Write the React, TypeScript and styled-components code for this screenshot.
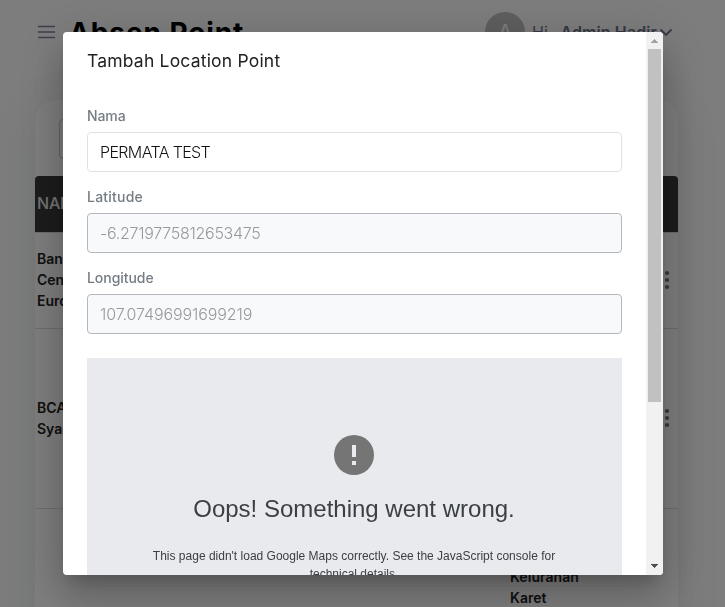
import React from "react";
import styled, { createGlobalStyle } from "styled-components";

const Global = createGlobalStyle`
  * { box-sizing: border-box; }
  html, body { margin: 0; height: 100%; overflow: hidden; }
  body { background: #fafafa; font-family: Inter, "Open Sans", sans-serif; }
`;

const Page = styled.div`
  height: 607px;
  overflow: hidden;
  padding: 0 47px 0 35px;
`;

const Header = styled.header`
  height: 64px;
  display: flex;
  align-items: center;
  padding-left: 3px;
`;

const Burger = styled.svg`
  display: block;
  width: 17px;
  height: 16px;
  margin-right: 14px;
  flex: none;
`;

const Title = styled.h1`
  margin: 0;
  padding-top: 2px;
  font-size: 28px;
  line-height: 40px;
  font-weight: 700;
  letter-spacing: 0.9px;
  color: #000;
  white-space: nowrap;
`;

const User = styled.div`
  margin-left: auto;
  display: flex;
  align-items: center;
  color: #6c7386;
  font-size: 16px;
  white-space: nowrap;
  margin-right: 5px;
`;

const Avatar = styled.div`
  width: 40px;
  height: 40px;
  border-radius: 50%;
  background: #bdbdbd;
  color: #fafafa;
  display: grid;
  place-items: center;
  font-size: 20px;
  margin-right: 7px;
`;

const UserName = styled.b`
  margin-left: 8px;
  font-weight: 600;
  letter-spacing: 0.1px;
`;

const Chevron = styled.svg`
  display: block;
  width: 14px;
  height: 9px;
  margin-left: 2px;
`;

const Card = styled.main`
  width: 643px;
  height: 620px;
  margin-top: 36px;
  border-radius: 20px;
  background: #fcfcfc;
  box-shadow: 0 8px 45px rgba(3, 65, 45, 0.1);
`;

const Filters = styled.div`
  height: 76px;
  padding: 19px 24px;
`;

const Search = styled.div`
  width: 240px;
  height: 40px;
  border: 1px solid #c4c4c4;
  border-radius: 4px;
`;

const TableHead = styled.div`
  height: 56px;
  padding: 0 2px 2px;
  display: flex;
  align-items: center;
  background: #383838;
  border-radius: 4px 4px 0 0;
  color: #e8e8e8;
  font-size: 16px;
  font-weight: 500;
  letter-spacing: -0.2px;
`;

const Row = styled.div<{ $height: number }>`
  height: ${(p) => p.$height}px;
  display: grid;
  grid-template-columns: 66px 1fr 176px 22px;
  align-items: center;
  padding: 0 0 2px 2px;
  border-top: 1px solid #dadada;
  color: #212121;
  font-size: 14px;
  line-height: 21px;
  font-weight: 600;
`;

const Address = styled.div`
  grid-column: 3;
  align-self: start;
  padding: 57px 0 0 30px;
  letter-spacing: 0.05px;
`;

const Dots = styled.svg`
  grid-column: 4;
  display: block;
  width: 22px;
  height: 20px;
`;

const Backdrop = styled.div`
  position: fixed;
  inset: 0;
  background: rgba(0, 0, 0, 0.5);
  display: flex;
  justify-content: center;
  align-items: flex-start;
  padding: 32px 0;
`;

const Dialog = styled.div`
  width: 600px;
  height: 543px;
  margin-left: 1px;
  display: flex;
  border-radius: 4px;
  overflow: hidden;
  background: #fff;
  box-shadow: 0 11px 15px -7px rgba(0, 0, 0, 0.2),
    0 24px 38px 3px rgba(0, 0, 0, 0.14), 0 9px 46px 8px rgba(0, 0, 0, 0.12);
`;

const Body = styled.div`
  width: 583px;
  padding: 0 24px;
  overflow: hidden;
`;

const DialogTitle = styled.h2`
  margin: 0;
  padding: 15px 0 31px;
  font-size: 17.5px;
  line-height: 28px;
  font-weight: 400;
  letter-spacing: 0.2px;
  color: #212121;
`;

const Field = styled.label`
  display: block;
  height: 81px;
`;

const Label = styled.span<{ $spacing: number }>`
  display: block;
  height: 26px;
  line-height: 19px;
  font-size: 14px;
  font-weight: 450;
  letter-spacing: ${(p) => p.$spacing}px;
  color: #747c84;
`;

const Input = styled.input<{ $spacing: number }>`
  display: block;
  width: 100%;
  height: 40px;
  margin: 0;
  padding: 0 12px;
  border: 1px solid #dee2e6;
  border-radius: 4px;
  background: #fff;
  outline: none;
  font-family: Inter, sans-serif;
  font-size: 16px;
  font-weight: 300;
  letter-spacing: ${(p) => p.$spacing}px;
  color: #111;
  &:disabled {
    border-color: #b4b7bb;
    background: #f8f9fb;
    color: #999;
  }
`;

const MapError = styled.section`
  height: 400px;
  margin-top: 9px;
  padding: 77px 61px 0 60px;
  background: #e8eaed;
  display: flex;
  flex-direction: column;
  align-items: center;
  text-align: center;
  font-family: "Liberation Sans", Arial, sans-serif;
  color: #3c4043;
`;

const ErrorIcon = styled.svg`
  display: block;
  width: 40px;
  height: 40px;
`;

const ErrorTitle = styled.div`
  margin-top: 20px;
  font-size: 24px;
  line-height: 28px;
  white-space: nowrap;
`;

const ErrorText = styled.div`
  margin-top: 24px;
  font-size: 12px;
  line-height: 18px;
`;

const Scrollbar = styled.div`
  width: 17px;
  background: #f1f1f1;
  display: flex;
  flex-direction: column;
  align-items: center;
`;

const Arrow = styled.svg`
  display: block;
  width: 17px;
  height: 17px;
  flex: none;
`;

const Track = styled.div`
  flex: 1;
  width: 13px;
`;

const Thumb = styled.div`
  height: 353px;
  background: #c1c1c1;
`;

const fields = [
  { label: "Nama", value: "PERMATA TEST", disabled: false, labelSpacing: -0.1, spacing: -0.62 },
  { label: "Latitude", value: "-6.2719775812653475", disabled: true, labelSpacing: 0.22, spacing: -0.28 },
  { label: "Longitude", value: "107.07496991699219", disabled: true, labelSpacing: -0.05, spacing: -0.1 },
];

const MoreIcon = () => (
  <Dots viewBox="0 0 22 20" fill="#707070">
    <circle cx="11" cy="3" r="2.1" />
    <circle cx="11" cy="10" r="2.1" />
    <circle cx="11" cy="17" r="2.1" />
  </Dots>
);

export default function App() {
  return (
    <>
      <Global />
      <Page>
        <Header>
          <Burger viewBox="0 0 17 16" stroke="#7c8199" strokeWidth="1.6">
            <path d="M0 2.5h17M0 8h17M0 13.5h17" />
          </Burger>
          <Title>Absen Point</Title>
          <User>
            <Avatar>A</Avatar>
            Hi, <UserName>Admin Hadir</UserName>
            <Chevron viewBox="0 0 14 9" fill="none" stroke="#6c7386" strokeWidth="1.8">
              <path d="M1.5 1.5 7 7l5.5-5.5" />
            </Chevron>
          </User>
        </Header>
        <Card>
          <Filters>
            <Search />
          </Filters>
          <TableHead>NAMA</TableHead>
          <Row $height={96}>
            <div>Bank<br />Central<br />Euro</div>
            <MoreIcon />
          </Row>
          <Row $height={180}>
            <div>BCA<br />Syariah</div>
            <MoreIcon />
          </Row>
          <Row $height={200}>
            <Address>Kelurahan<br />Karet</Address>
          </Row>
        </Card>
      </Page>
      <Backdrop>
        <Dialog role="dialog">
          <Body>
            <DialogTitle>Tambah Location Point</DialogTitle>
            {fields.map((f) => (
              <Field key={f.label}>
                <Label $spacing={f.labelSpacing}>{f.label}</Label>
                <Input $spacing={f.spacing} defaultValue={f.value} disabled={f.disabled} />
              </Field>
            ))}
            <MapError>
              <ErrorIcon viewBox="0 0 40 40">
                <circle cx="20" cy="20" r="20" fill="#757575" />
                <path d="M18 10h4v12h-4zM18 26h4v4h-4z" fill="#e8eaed" />
              </ErrorIcon>
              <ErrorTitle>Oops! Something went wrong.</ErrorTitle>
              <ErrorText>
                This page didn't load Google Maps correctly. See the JavaScript console for technical details.
              </ErrorText>
            </MapError>
          </Body>
          <Scrollbar>
            <Arrow viewBox="0 0 17 17" shapeRendering="crispEdges">
              <path d="M5 11h7L8.5 7z" fill="#a3a3a3" />
            </Arrow>
            <Track>
              <Thumb />
            </Track>
            <Arrow viewBox="0 0 17 17" shapeRendering="crispEdges">
              <path d="M5 6h7L8.5 10z" fill="#505050" />
            </Arrow>
          </Scrollbar>
        </Dialog>
      </Backdrop>
    </>
  );
}
